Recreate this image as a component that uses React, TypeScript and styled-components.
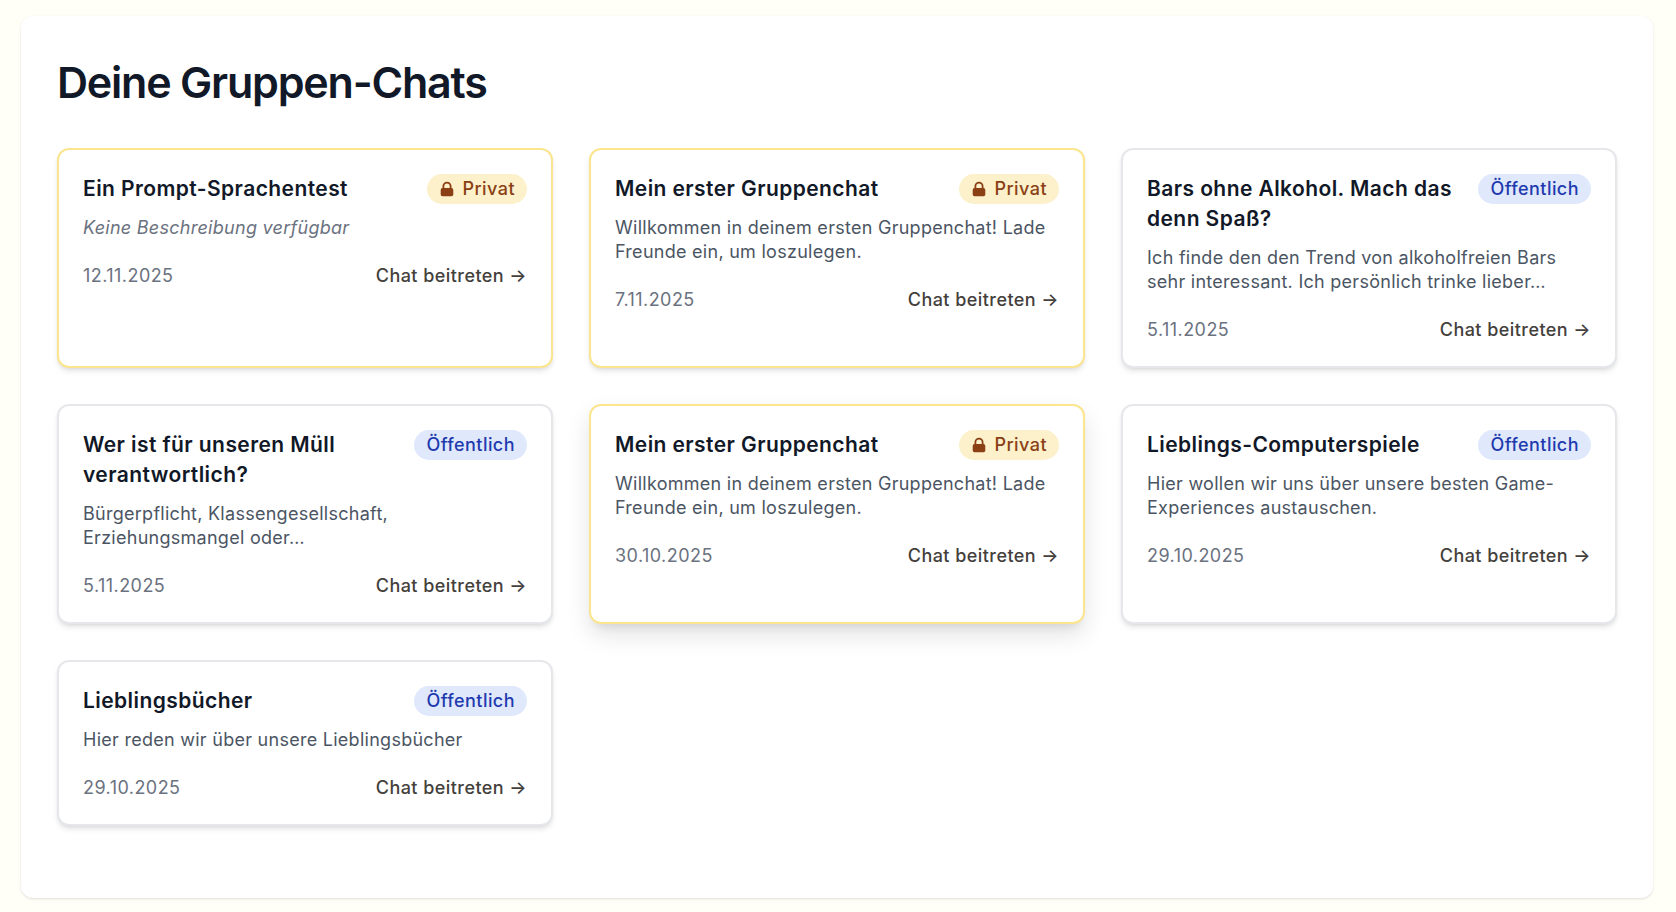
import React from "react";
import styled, { createGlobalStyle, css } from "styled-components";
import { HiLockClosed } from "react-icons/hi";

const GlobalStyle = createGlobalStyle`
  *, *::before, *::after { box-sizing: border-box; }
  body {
    margin: 0;
    background: #fffff8;
    color: #111827;
    font-family: Inter, "Liberation Sans", sans-serif;
    font-size: 18px;
    line-height: 24px;
    letter-spacing: 0.025em;
    -webkit-font-smoothing: antialiased;
  }
`;

const Page = styled.div`
  padding: 16px 23px 14px 21px;
`;

const Panel = styled.main`
  padding: 36px 36px 72px;
  border-radius: 12px;
  background: #ffffff;
  box-shadow: 0 1px 3px rgba(0, 0, 0, 0.1), 0 1px 2px -1px rgba(0, 0, 0, 0.1);
`;

const Heading = styled.h1`
  margin: 0 0 36px;
  font-size: 43px;
  line-height: 60px;
  font-weight: 600;
  letter-spacing: -0.028em;
`;

const CardGrid = styled.div`
  display: grid;
  grid-template-columns: repeat(3, minmax(0, 1fr));
  gap: 36px;

  @media (max-width: 1100px) {
    grid-template-columns: repeat(2, minmax(0, 1fr));
  }
  @media (max-width: 720px) {
    grid-template-columns: minmax(0, 1fr);
  }
`;

const raised = css`
  box-shadow: 0 11px 24px rgba(0, 0, 0, 0.11), 0 8px 10px -6px rgba(0, 0, 0, 0.1);
`;

const Card = styled.article<{ $private: boolean; $raised: boolean }>`
  padding: 24px;
  border: 2px solid ${({ $private }) => ($private ? "#fbe58e" : "#e5e7eb")};
  border-radius: 12px;
  background: #ffffff;
  box-shadow: 0 4px 6px -1px rgba(0, 0, 0, 0.1), 0 2px 4px -2px rgba(0, 0, 0, 0.1);
  ${({ $raised }) => $raised && raised}

  &:hover {
    ${raised}
  }
`;

const CardHeader = styled.header`
  display: flex;
  align-items: flex-start;
  justify-content: space-between;
  gap: 12px;
  margin-bottom: 12px;
`;

const CardTitle = styled.h2`
  margin: 0;
  font-size: 21px;
  line-height: 30px;
  font-weight: 600;
  letter-spacing: 0.02em;
`;

const Badge = styled.span<{ $private: boolean }>`
  display: inline-flex;
  flex: none;
  align-items: center;
  gap: 6px;
  height: 30px;
  padding: 0 12px 0 ${({ $private }) => ($private ? "11px" : "12px")};
  border-radius: 15px;
  font-weight: 500;
  color: ${({ $private }) => ($private ? "#8a4014" : "#233aaf")};
  background: ${({ $private }) => ($private ? "#fcf1cb" : "#dfe9fb")};
`;

const Description = styled.p<{ $empty: boolean }>`
  display: -webkit-box;
  overflow: hidden;
  margin: 0 0 24px;
  color: ${({ $empty }) => ($empty ? "#6b7280" : "#4b5563")};
  font-style: ${({ $empty }) => ($empty ? "italic" : "normal")};
  letter-spacing: 0.015em;
  -webkit-box-orient: vertical;
  -webkit-line-clamp: 2;
`;

const CardFooter = styled.footer`
  display: flex;
  align-items: center;
  justify-content: space-between;
`;

const DateText = styled.time`
  color: #6b7280;
`;

const JoinLink = styled.a`
  color: #44403c;
  font-weight: 500;
  text-decoration: none;
`;

interface Chat {
  title: string;
  description?: string;
  date: string;
  isPrivate?: boolean;
  raised?: boolean;
}

const welcome = "Willkommen in deinem ersten Gruppenchat! Lade Freunde ein, um loszulegen.";

const chats: Chat[] = [
  { title: "Ein Prompt-Sprachentest", date: "12.11.2025", isPrivate: true },
  { title: "Mein erster Gruppenchat", description: welcome, date: "7.11.2025", isPrivate: true },
  {
    title: "Bars ohne Alkohol. Mach das denn Spaß?",
    description: "Ich finde den den Trend von alkoholfreien Bars sehr interessant. Ich persönlich trinke lieber…",
    date: "5.11.2025",
  },
  {
    title: "Wer ist für unseren Müll verantwortlich?",
    description: "Bürgerpflicht, Klassengesellschaft, Erziehungsmangel oder…",
    date: "5.11.2025",
  },
  { title: "Mein erster Gruppenchat", description: welcome, date: "30.10.2025", isPrivate: true, raised: true },
  {
    title: "Lieblings-Computerspiele",
    description: "Hier wollen wir uns über unsere besten Game-Experiences austauschen.",
    date: "29.10.2025",
  },
  { title: "Lieblingsbücher", description: "Hier reden wir über unsere Lieblingsbücher", date: "29.10.2025" },
];

function ChatCard({ title, description, date, isPrivate = false, raised: lifted = false }: Chat) {
  return (
    <Card $private={isPrivate} $raised={lifted}>
      <CardHeader>
        <CardTitle>{title}</CardTitle>
        <Badge $private={isPrivate}>
          {isPrivate && <HiLockClosed size={18} aria-hidden="true" />}
          {isPrivate ? "Privat" : "Öffentlich"}
        </Badge>
      </CardHeader>
      <Description $empty={!description}>{description ?? "Keine Beschreibung verfügbar"}</Description>
      <CardFooter>
        <DateText>{date}</DateText>
        <JoinLink href="#">Chat beitreten →</JoinLink>
      </CardFooter>
    </Card>
  );
}

export default function App() {
  return (
    <>
      <GlobalStyle />
      <Page>
        <Panel>
          <Heading>Deine Gruppen-Chats</Heading>
          <CardGrid>
            {chats.map((chat, index) => (
              <ChatCard key={index} {...chat} />
            ))}
          </CardGrid>
        </Panel>
      </Page>
    </>
  );
}
